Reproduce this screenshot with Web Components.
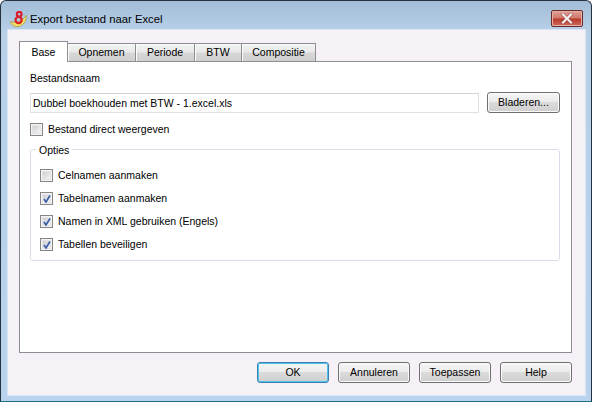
<!DOCTYPE html>
<html>
<head>
<meta charset="utf-8">
<style>
html,body{margin:0;padding:0;background:#fff;}
body{width:593px;height:403px;overflow:hidden;font:10.5px "Liberation Sans",sans-serif;color:#000;}
</style>
</head>
<body>
<export-dialog></export-dialog>
<script>
const UI_FONT = '"Liberation Sans",Arial,sans-serif';

class winButton extends HTMLElement{
  connectedCallback(){
    const def = this.hasAttribute('default');
    this.attachShadow({mode:'open'}).innerHTML = `
      <style>
        :host{display:block;height:21px;box-sizing:border-box;border:1px solid ${def?'#3c7fb1':'#707070'};border-radius:3px;
          background:linear-gradient(#f6f6f6 0,#ebebeb 48%,#dbdbdb 50%,#cfcfcf 100%);
          ${def?'box-shadow:inset 0 0 0 1px #4fc3ea;':'box-shadow:inset 0 0 0 1px #fbfbfb;'}
          font:10.5px ${UI_FONT};color:#000;text-align:center;line-height:19px;}
      </style><slot></slot>`;
  }
}
customElements.define('win-button',winButton);

class winCheck extends HTMLElement{
  connectedCallback(){
    const on = this.hasAttribute('checked');
    this.attachShadow({mode:'open'}).innerHTML = `
      <style>
        :host{display:flex;align-items:flex-start;gap:5px;height:13px;font:10.5px ${UI_FONT};color:#000;white-space:nowrap;}
        .box{width:13px;height:13px;box-sizing:border-box;border:1px solid #868686;background:#f4f4f4;flex:none;position:relative;}
        .box::before{content:'';position:absolute;inset:1px;background:linear-gradient(135deg,#cfcfd3,#f4f4f6);border:1px solid #e4e4e6;box-sizing:border-box;}
        .text{line-height:12px;}
        svg{position:absolute;left:1px;top:1px;}
      </style>
      <span class="box">${on?'<svg width="10" height="10" viewBox="0 0 10 10"><path d="M2 5 L4 8 L8 1.5" fill="none" stroke="#3b5fa8" stroke-width="1.7"/></svg>':''}</span>
      <span class="text"><slot></slot></span>`;
  }
}
customElements.define('win-check',winCheck);

class tabStrip extends HTMLElement{
  connectedCallback(){
    this.attachShadow({mode:'open'}).innerHTML = `
      <style>
        :host{display:flex;align-items:flex-end;height:21px;font:10.5px ${UI_FONT};color:#000;position:relative;z-index:1;margin-bottom:-1px;}
        span{box-sizing:border-box;height:19px;border:1px solid #8c8e94;border-left:0;
          background:linear-gradient(#f3f3f3,#e9e9e9 48%,#d8d8d8 52%,#cfcfcf);text-align:center;line-height:17px;box-shadow:inset 1px 1px 0 #fbfbfb;}
        .on{height:21px;background:#fff;border:1px solid #8c8e94;border-bottom:0;box-shadow:none;line-height:20px;}
      </style>
      <span class="on" style="width:49px">Base</span>
      <span style="width:68px">Opnemen</span>
      <span style="width:59px">Periode</span>
      <span style="width:47px">BTW</span>
      <span style="width:74px">Compositie</span>`;
  }
}
customElements.define('tab-strip',tabStrip);

class optionsGroup extends HTMLElement{
  connectedCallback(){
    this.attachShadow({mode:'open'}).innerHTML = `
      <style>
        :host{display:flex;flex-direction:column;gap:10px;box-sizing:border-box;height:112px;border:1px solid #d9dfea;border-radius:3px;
          padding:19px 9px 0;position:relative;}
        .legend{position:absolute;left:5px;top:-7px;background:#fff;padding:0 3px;font:10.5px ${UI_FONT};color:#000;line-height:14px;}
      </style>
      <span class="legend">Opties</span>
      <slot></slot>`;
  }
}
customElements.define('options-group',optionsGroup);

class exportDialog extends HTMLElement{
  connectedCallback(){
    this.attachShadow({mode:'open'}).innerHTML = `
      <style>
        :host{display:block;width:592px;height:402px;box-sizing:border-box;border:1px solid #24323f;border-bottom-color:#1b6f86;border-radius:6px 6px 0 0;
          background:linear-gradient(180deg,#a3bdd6 0,#b7d0e8 30px,#b9d3ee 100%);padding:0 6px 6px 7px;font:10.5px ${UI_FONT};color:#000;position:relative;}
        .title{display:flex;align-items:center;height:29px;gap:3px;font:11.3px ${UI_FONT};color:#000;box-sizing:border-box;padding:6px 0 0 2px;}
        .title span{flex:1;}
        .close{width:32px;height:17px;align-self:flex-end;margin:0 2px 3px 0;box-sizing:border-box;border:1px solid #6b2a2a;border-radius:2px;
          background:linear-gradient(#e0a097,#d27a6c 45%,#b8392b 55%,#cf6c5f);display:flex;align-items:center;justify-content:center;flex:none;box-shadow:inset 0 0 0 1px #e6b0a8;}
        .client{box-sizing:border-box;height:365px;background:#f5f1f6;padding:11px 13px 0 11px;display:flex;flex-direction:column;box-shadow:0 0 0 1px #d8e5f3;}
        .pane{box-sizing:border-box;height:292px;background:#fff;border:1px solid #8c8e94;padding:9px 11px 0 10px;display:flex;flex-direction:column;}
        .label{line-height:15px;height:14px;}
        .row{display:flex;gap:8px;margin-top:7px;align-items:center;}
        .file{flex:1;box-sizing:border-box;height:20px;border:1px solid #dde2e9;border-top-color:#cfd3da;background:#fff;line-height:19px;padding-left:2px;white-space:nowrap;}
        .row win-button{width:73px;}
        .direct{margin-top:10px;}
        options-group{margin-top:13px;}
        .footer{display:flex;justify-content:flex-end;gap:9px;margin-top:9px;}
        .footer win-button{width:72px;}
      </style>
      <div class="title">
        <svg width="17" height="16" viewBox="0 0 17 16">
          <path d="M0.5 10.5 C4 12.5 12 11 16.2 4.5 C17 10 12.5 15.8 6.7 15.6 C3.5 15.5 1.2 13.5 0.5 10.5Z" fill="#f4e06a" stroke="#a8902a" stroke-width=".7"/>
          <circle cx="9.2" cy="3.2" r="2.4" fill="none" stroke="#d81f2a" stroke-width="2.2"/>
          <circle cx="8.6" cy="9" r="3.1" fill="none" stroke="#d81f2a" stroke-width="2.2"/>
        </svg>
        <span>Export bestand naar Excel</span>
        <div class="close"><svg width="16" height="11" viewBox="0 0 16 11"><path d="M4 1.5 L12 9.5 M12 1.5 L4 9.5" stroke="#5a2020" stroke-width="3.4" stroke-linecap="square" opacity=".45"/><path d="M4 1.5 L12 9.5 M12 1.5 L4 9.5" stroke="#f4f0f0" stroke-width="2.2" stroke-linecap="square"/></svg></div>
      </div>
      <div class="client">
        <tab-strip></tab-strip>
        <div class="pane">
          <div class="label">Bestandsnaam</div>
          <div class="row">
            <div class="file">Dubbel boekhouden met BTW - 1.excel.xls</div>
            <win-button>Bladeren...</win-button>
          </div>
          <win-check class="direct">Bestand direct weergeven</win-check>
          <options-group>
            <win-check>Celnamen aanmaken</win-check>
            <win-check checked>Tabelnamen aanmaken</win-check>
            <win-check checked>Namen in XML gebruiken (Engels)</win-check>
            <win-check checked>Tabellen beveiligen</win-check>
          </options-group>
        </div>
        <div class="footer">
          <win-button default>OK</win-button>
          <win-button>Annuleren</win-button>
          <win-button>Toepassen</win-button>
          <win-button>Help</win-button>
        </div>
      </div>`;
  }
}
customElements.define('export-dialog',exportDialog);
</script>
</body>
</html>
